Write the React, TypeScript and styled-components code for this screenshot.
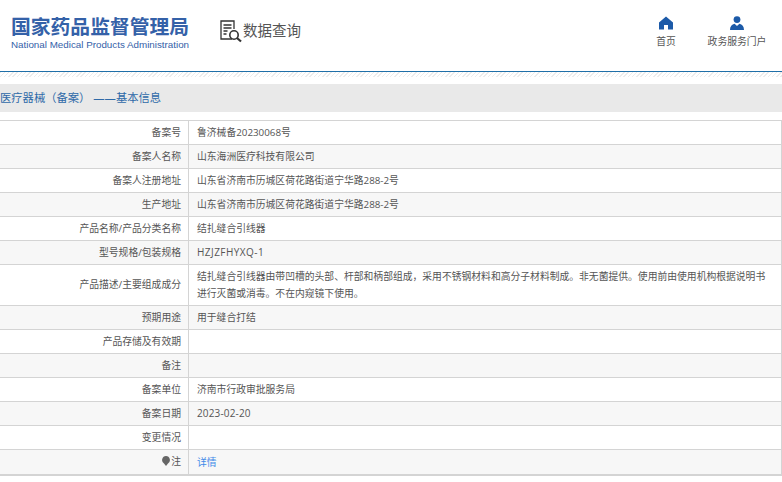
import React from 'react'
import styled, { createGlobalStyle } from 'styled-components'

const GlobalStyle = createGlobalStyle`
  html, body {
    margin: 0;
    padding: 0;
    background: #fff;
    overflow: hidden;
  }
  body {
    font-family: 'Open Sans', 'Noto Sans CJK SC', sans-serif;
  }
`

const Page = styled.div`
  width: 782px;
  height: 482px;
  overflow: hidden;
`

const Header = styled.header`
  height: 71px;
  display: flex;
  align-items: flex-start;
  border-bottom: 1px solid #1f6fa8;
`

const Brand = styled.div`
  margin: 16px 0 0 11px;
  width: 190px;
`

const BrandName = styled.div`
  font-size: 19.8px;
  line-height: 22px;
  font-weight: 700;
  color: #3461a8;
  white-space: nowrap;
`

const BrandSub = styled.div`
  margin-top: 1px;
  font-family: 'Liberation Sans', sans-serif;
  font-size: 9.8px;
  line-height: 12px;
  color: #3461a8;
  white-space: nowrap;
`

const QueryTitle = styled.div`
  margin: 19px 0 0 18px;
  display: flex;
  align-items: center;
  font-size: 14.5px;
  line-height: 22px;
  color: #555;
`

const Nav = styled.nav`
  margin-left: auto;
  margin-top: 16px;
  padding-right: 4px;
  display: flex;
`

const NavItem = styled.a<{ $width: number }>`
  width: ${(p) => p.$width}px;
  display: flex;
  flex-direction: column;
  align-items: center;
  gap: 6px;
  font-size: 9.8px;
  line-height: 12px;
  color: #555;
`

const Hatch = styled.div`
  height: 12px;
  background: repeating-linear-gradient(135deg, #ececec 0 1px, #fff 1px 3px);
  background-size: 100% 5px;
  background-repeat: no-repeat;
`

const SectionTitle = styled.h2`
  margin: 0;
  height: 28px;
  background: #e9e9e9;
  font-size: 11.3px;
  font-weight: 400;
  line-height: 28px;
  color: #2f6aa8;
  white-space: pre;
`

const Table = styled.table`
  margin-top: 8px;
  width: 782px;
  table-layout: fixed;
  border-collapse: collapse;
  border-top: 1px solid #d4d4d4;
  border-bottom: 2px solid #d4d4d4;
  border-right: 1px solid #d4d4d4;
  font-size: 9.8px;
  color: #555;
`

const Row = styled.tr<{ $shaded: boolean }>`
  background: ${(p) => (p.$shaded ? '#f7f7f7' : '#fff')};
  border-bottom: 1px solid #d4d4d4;
`

const Label = styled.th`
  width: 181px;
  height: 23px;
  padding: 0 7px 0 0;
  text-align: right;
  font-weight: 400;
  line-height: 14px;
  border-right: 1px solid #d4d4d4;
`

const Value = styled.td`
  padding: 3px 8px;
  line-height: 17px;
  white-space: pre-line;
`

const Code = styled.span<{ $spacing: number }>`
  font-size: 10px;
  letter-spacing: ${(p) => p.$spacing}px;
`

const Detail = styled.a`
  display: inline-block;
  padding-top: 1px;
  color: #3f8ae8;
`

const LabelIcon = styled.svg`
  width: 8px;
  height: 10px;
  margin-right: 1px;
  vertical-align: -1px;
`

const DocSearchIcon = () => (
  <svg width="24" height="24" viewBox="0 0 24 24" fill="none" stroke="#333" strokeWidth="1.3">
    <path d="M13 20H2V2h13v8" />
    <path d="M4.5 6h8M4.5 9h8M4.5 12h4M4.5 15h3" />
    <circle cx="15" cy="16" r="4.2" strokeWidth="1.6" />
    <path d="M18 19l4 3.5" strokeWidth="2.2" />
  </svg>
)

const HomeIcon = () => (
  <svg width="14" height="14" viewBox="0 0 14 14" fill="#1c5aa8">
    <path d="M7 .5L14 6.5V13.5H9V9H5V13.5H0V6.5Z" />
  </svg>
)

const PersonIcon = () => (
  <svg width="14" height="14" viewBox="0 0 14 14" fill="#1c5aa8">
    <circle cx="7" cy="3.6" r="3.4" />
    <path d="M0 14c0-3.5 1.8-5.6 4.6-6.2L7 10l2.4-2.2C12.2 8.4 14 10.5 14 14Z" />
  </svg>
)

const rows: { label: React.ReactNode; value?: React.ReactNode }[] = [
  { label: '备案号', value: '鲁济械备20230068号' },
  { label: '备案人名称', value: '山东海洲医疗科技有限公司' },
  { label: '备案人注册地址', value: '山东省济南市历城区荷花路街道宁华路288-2号' },
  { label: '生产地址', value: '山东省济南市历城区荷花路街道宁华路288-2号' },
  { label: '产品名称/产品分类名称', value: '结扎缝合引线器' },
  { label: '型号规格/包装规格', value: <Code $spacing={0.45}>HZJZFHYXQ-1</Code> },
  {
    label: '产品描述/主要组成成分',
    value:
      '结扎缝合引线器由带凹槽的头部、杆部和柄部组成，采用不锈钢材料和高分子材料制成。非无菌提供。使用前由使用机构根据说明书\n进行灭菌或消毒。不在内窥镜下使用。',
  },
  { label: '预期用途', value: '用于缝合打结' },
  { label: '产品存储及有效期' },
  { label: '备注' },
  { label: '备案单位', value: '济南市行政审批服务局' },
  { label: '备案日期', value: <Code $spacing={0.15}>2023-02-20</Code> },
  { label: '变更情况' },
  {
    label: (
      <>
        <LabelIcon viewBox="0 0 8 10" fill="#666">
          <path d="M4 0a4 4 0 0 1 2 7.4L4 10 2 7.4A4 4 0 0 1 4 0Z" />
        </LabelIcon>
        注
      </>
    ),
    value: <Detail>详情</Detail>,
  },
]

export default function App() {
  return (
    <Page>
      <GlobalStyle />
      <Header>
        <Brand>
          <BrandName>国家药品监督管理局</BrandName>
          <BrandSub>National Medical Products Administration</BrandSub>
        </Brand>
        <QueryTitle>
          <DocSearchIcon />
          数据查询
        </QueryTitle>
        <Nav>
          <NavItem $width={60}>
            <HomeIcon />
            首页
          </NavItem>
          <NavItem $width={82}>
            <PersonIcon />
            政务服务门户
          </NavItem>
        </Nav>
      </Header>
      <Hatch />
      <SectionTitle>医疗器械（备案） ——基本信息</SectionTitle>
      <Table>
        <tbody>
          {rows.map((row, i) => (
            <Row key={i} $shaded={i % 2 === 1}>
              <Label>{row.label}</Label>
              <Value>{row.value}</Value>
            </Row>
          ))}
        </tbody>
      </Table>
    </Page>
  )
}
